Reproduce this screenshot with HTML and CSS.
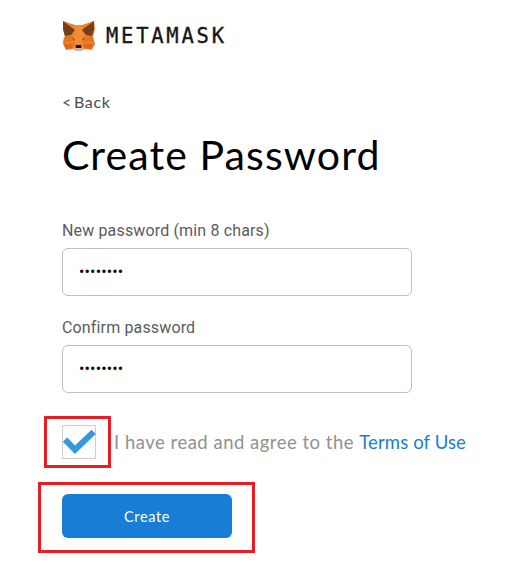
FILE: index.html
```html
<!DOCTYPE html>
<html lang="en">
<head>
  <meta charset="UTF-8" />
  <meta name="viewport" content="width=device-width, initial-scale=1.0"/>
  <title>MetaMask</title>
  <link rel="stylesheet" href="styles.css">
</head>
<body>
  <header class="logo">
    <svg class="fox" viewBox="0 0 33 32" width="33" height="32">
      <path fill="#ee7f2a" d="M1 1l12 4h7l12-4 1 8-2 8 2 7-3 6-7-1-4 2h-4l-4-2-7 1-3-6 2-7-2-8z"/>
      <path fill="#e4761b" d="M2 17l9-1 2 4-12 3zM31 17l-9-1-2 4 12 3z"/>
      <path fill="#f28c35" d="M13 5h7l2 10-3 9h-5l-3-9z"/>
      <path fill="#763e1a" d="M1 1l12 9-4 5-6 1-2-7zM32 1L20 10l4 5 6 1 2-7z"/>
      <path fill="#d9691c" d="M2 24h9l-1 4-6 1zM31 24h-9l1 4 6 1z"/>
      <path fill="#c8b3a6" d="M11 29l3-3h5l3 3-3 2h-5z"/>
      <path fill="#64605c" d="M10 18l3 1-1 1.500zM23 18l-3 1 1 1.500z"/>
      <path fill="#161616" d="M14 25h5l.5 3h-6z"/>
    </svg>
    <span class="wordmark">METAMASK</span>
  </header>

  <form class="create-password" onsubmit="return false">
    <a class="back">&lt; <span>Back</span></a>
    <h1>Create Password</h1>

    <label for="password">New password (min 8 chars)</label>
    <input type="password" id="password" value="password" />

    <label for="confirm">Confirm password</label>
    <input type="password" id="confirm" value="password" />

    <div class="terms">
      <span class="checkbox marked">
        <svg viewBox="0 0 34 34" width="34" height="34">
          <path d="M3 14.700 13 24.700 31.600 6.800" fill="none" stroke="#3498db" stroke-width="6"/>
        </svg>
      </span>
      <span class="terms-text">I have read and agree to the <a class="link">Terms of Use</a></span>
    </div>

    <div class="actions marked">
      <button type="submit">Create</button>
    </div>
  </form>
</body>
</html>
```
FILE: styles.css
```css
* {
  box-sizing: border-box;
}
body {
  margin: 0;
  padding: 20px 0 0 62px;
  width: 526px;
  height: 564px;
  overflow: hidden;
  background: #fff;
  font-family: Lato, sans-serif;
}
.logo {
  display: flex;
  align-items: center;
  gap: 11px;
  height: 32px;
}
.fox {
  display: block;
}
.wordmark {
  font-family: "DejaVu Sans Mono", monospace;
  font-size: 20.5px;
  line-height: 32px;
  letter-spacing: 2.75px;
  color: #161616;
  -webkit-text-stroke: 0.35px #161616;
}
.create-password {
  display: flex;
  flex-direction: column;
  align-items: flex-start;
}
.back {
  margin-top: 39px;
  font-size: 16px;
  line-height: 22px;
  color: #4d4d4d;
  word-spacing: -1.5px;
}
.back span {
  letter-spacing: 0.7px;
}
h1 {
  margin: 14px 0 0;
  font-size: 41px;
  font-weight: normal;
  line-height: 56px;
  letter-spacing: 1.1px;
  color: #000;
  white-space: nowrap;
}
label {
  margin-top: 38px;
  font-family: Roboto, sans-serif;
  font-size: 16px;
  line-height: 20px;
  letter-spacing: 0.15px;
  color: #5b5b5b;
}
input {
  width: 350px;
  height: 48px;
  margin-top: 7px;
  padding: 0 16px 2px;
  border: 1px solid #bbc0c5;
  border-radius: 6px;
  background: #fff;
  font-family: Roboto, sans-serif;
  font-size: 16px;
  letter-spacing: 0.15px;
  color: #000;
}
input + label {
  margin-top: 22px;
}
.terms {
  display: flex;
  align-items: center;
  gap: 18px;
  margin-top: 32px;
}
.checkbox {
  width: 34px;
  height: 34px;
  box-shadow: inset 0 0 0 1px #cdcdcd;
}
.checkbox svg {
  display: block;
}
.terms-text {
  font-size: 18.5px;
  line-height: 26px;
  letter-spacing: 0.5px;
  color: #939090;
  white-space: nowrap;
}
.link {
  color: #1a7dd7;
  letter-spacing: 0.12px;
}
.actions {
  margin-top: 35px;
}
button {
  display: block;
  width: 170px;
  height: 44px;
  padding: 0;
  border: none;
  border-radius: 6px;
  background: #187dd5;
  color: #fff;
  font-family: Lato, sans-serif;
  font-size: 14.5px;
  letter-spacing: 0.6px;
}

/* red highlight frames */
.marked {
  position: relative;
}
.marked::after {
  content: "";
  position: absolute;
  border: 3px solid #ed1c24;
}
.checkbox.marked::after {
  inset: -9px -15px -9px -18px;
}
.actions.marked::after {
  inset: -12px -23px -15px -24px;
}
```
